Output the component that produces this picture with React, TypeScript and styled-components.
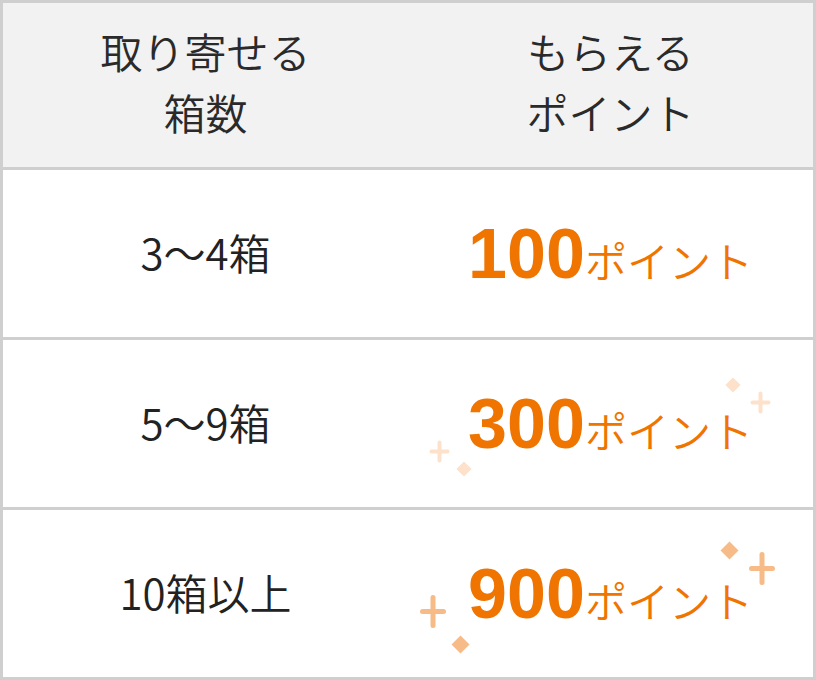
import { FC } from 'react'
import styled, { createGlobalStyle } from 'styled-components'

const GlobalStyle = createGlobalStyle`
  html, body {
    margin: 0;
    padding: 0;
    background: #ffffff;
  }
  body {
    font-family: 'Noto Sans CJK JP', 'Noto Sans', sans-serif;
    color: #222222;
  }
`

type Tone = 'none' | 'light' | 'strong'

type Spark = { kind: 'plus' | 'diamond'; x: number; y: number; w: number; h: number }

// sparkle positions are relative to the points cell
const sparkles: Record<Tone, Spark[]> = {
  none: [],
  light: [
    { kind: 'plus', x: 21, y: 100, w: 21, h: 23 },
    { kind: 'diamond', x: 48, y: 121, w: 16, h: 16 },
    { kind: 'diamond', x: 317, y: 37, w: 16, h: 16 },
    { kind: 'plus', x: 342, y: 51, w: 21, h: 23 },
  ],
  strong: [
    { kind: 'plus', x: 12, y: 85, w: 26, h: 33 },
    { kind: 'diamond', x: 43, y: 125, w: 19, h: 19 },
    { kind: 'diamond', x: 312, y: 31, w: 19, h: 19 },
    { kind: 'plus', x: 341, y: 42, w: 26, h: 33 },
  ],
}

const rows: { boxes: string; points: string; tone: Tone }[] = [
  { boxes: '3〜4箱', points: '100', tone: 'none' },
  { boxes: '5〜9箱', points: '300', tone: 'light' },
  { boxes: '10箱以上', points: '900', tone: 'strong' },
]

const sparkleColor = (tone: Tone) => (tone === 'strong' ? '#f6bb87' : '#fde1ca')

const Plus: FC<{ color: string; w: number; h: number }> = ({ color, w, h }) => (
  <svg width={w} height={h} viewBox={`0 0 ${w} ${h}`}>
    <path
      d={`M${w / 2} 2.5V${h - 2.5}M2.5 ${h / 2}H${w - 2.5}`}
      stroke={color}
      strokeWidth={w > 22 ? 5 : 4}
      strokeLinecap="round"
      fill="none"
    />
  </svg>
)

const Diamond: FC<{ color: string; size: number }> = ({ color, size }) => (
  <svg width={size} height={size} viewBox="0 0 20 20">
    <path d="M10 0.5l9.5 9.5-9.5 9.5-9.5-9.5z" fill={color} />
  </svg>
)

const PointTable: FC = () => {
  return (
    <Table>
      <HeaderRow>
        <HeadCell>
          取り寄せる
          <br />
          箱数
        </HeadCell>
        <HeadCell>
          もらえる
          <br />
          ポイント
        </HeadCell>
      </HeaderRow>
      {rows.map((r) => {
        const c = sparkleColor(r.tone)
        return (
          <BodyRow key={r.points}>
            <BoxCell>{r.boxes}</BoxCell>
            <PointCell>
              {sparkles[r.tone].map((s, i) => (
                <Sparkle key={i} $x={s.x} $y={s.y}>
                  {s.kind === 'plus' ? (
                    <Plus color={c} w={s.w} h={s.h} />
                  ) : (
                    <Diamond color={c} size={s.w} />
                  )}
                </Sparkle>
              ))}
              <PointText>
                <Amount>{r.points}</Amount>
                <Unit>ポイント</Unit>
              </PointText>
            </PointCell>
          </BodyRow>
        )
      })}
    </Table>
  )
}

const Table = styled.div`
  box-sizing: border-box;
  width: 816px;
  height: 680px;
  border: 3px solid #cfcfcf;
  display: flex;
  flex-direction: column;
`

const HeaderRow = styled.div`
  display: grid;
  grid-template-columns: 1fr 1fr;
  height: 164px;
  background: #f2f2f2;
  border-bottom: 3px solid #cfcfcf;
`

const HeadCell = styled.div`
  display: flex;
  align-items: center;
  justify-content: center;
  text-align: center;
  font-size: 42px;
  font-weight: 350;
  line-height: 61px;
  padding-bottom: 8px;
  color: #2a2a2a;
`

const BodyRow = styled.div`
  display: grid;
  grid-template-columns: 1fr 1fr;
  height: 167px;
  border-bottom: 3px solid #cfcfcf;

  &:last-child {
    border-bottom: none;
  }
`

const BoxCell = styled.div`
  display: flex;
  align-items: center;
  justify-content: center;
  font-size: 42px;
  font-weight: 350;
  padding-bottom: 4px;
  color: #222222;
`

const PointCell = styled.div`
  position: relative;
  display: flex;
  align-items: center;
  justify-content: center;
`

const PointText = styled.div`
  display: flex;
  align-items: baseline;
  color: #ef7400;
`

const Amount = styled.span`
  font-family: 'Liberation Sans', Arial, sans-serif;
  font-weight: 700;
  font-size: 70px;
  line-height: 1;
`

const Unit = styled.span`
  font-size: 42px;
  font-weight: 350;
  line-height: 1;
`

const Sparkle = styled.span<{ $x: number; $y: number }>`
  position: absolute;
  left: ${(p) => p.$x}px;
  top: ${(p) => p.$y}px;
  display: block;
  line-height: 0;
`

const App: FC = () => (
  <>
    <GlobalStyle />
    <PointTable />
  </>
)

export default App
